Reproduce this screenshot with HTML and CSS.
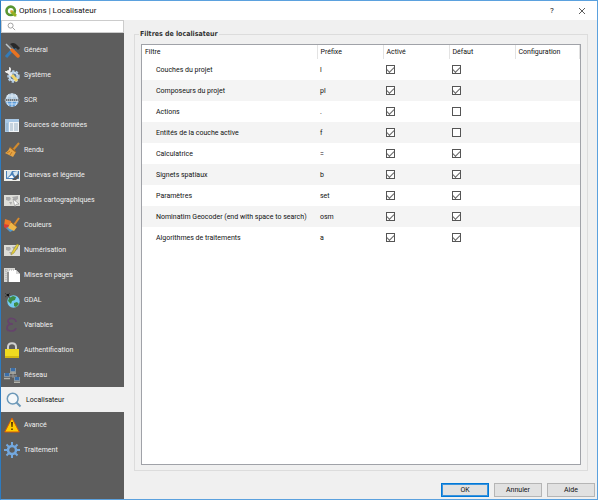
FILE: index.html
```html
<!DOCTYPE html>
<html lang="fr">
<head>
  <meta charset="UTF-8" />
  <title>Options | Localisateur</title>
  <link rel="stylesheet" href="styles.css">
</head>
<body>
  <div class="window">
    <header class="titlebar">
      <svg class="logo" viewBox="0 0 12 12"><circle cx="5.7" cy="5.8" r="4.2" fill="none" stroke="#589632" stroke-width="2.6"/><path d="M5.5 5.5h2.2l3.6 3.8v2.1H9.2L5.5 7.6z" fill="#93b023"/><path d="M5.5 5.5h1.5l.8 1-1 1-1.3-1z" fill="#ee9a33"/></svg>
      <h1>Options | Localisateur</h1>
      <button class="title-btn" aria-label="Aide">?</button>
      <button class="title-btn" aria-label="Fermer"><svg viewBox="0 0 8 8"><path d="M1 1l6 6M7 1L1 7" stroke="#333" stroke-width=".8" fill="none"/></svg></button>
    </header>

    <div class="content">
      <div class="sidebar">
        <div class="search">
          <svg viewBox="0 0 10 10"><circle cx="4" cy="4" r="2.8" fill="none" stroke="#999"/><path d="M6 6l3 3" stroke="#999"/></svg>
          <input type="text" aria-label="Rechercher">
        </div>
        <nav>
          <a href="#"><svg viewBox="0 0 16 16"><path d="M2 15L11 5" stroke="#347bb8" stroke-width="3"/><path d="M2 2l6 6" stroke="#bcc5c9" stroke-width="1.5"/><path d="M8 8l6 6" stroke="#e87322" stroke-width="3.5" stroke-linecap="round"/><path d="M6 2c3-2 5-1 7 1l3 3-2 2-2-2-2 1-2-3z" fill="#292929"/></svg>Général</a>
          <a href="#"><svg viewBox="0 0 16 16"><circle cx="9.5" cy="9.5" r="5" fill="#d8e5f0" stroke="#b1cce4" stroke-width="2.5" stroke-dasharray="2.2 1.4"/><circle cx="9.5" cy="9.5" r="3" fill="#57799a"/><path d="M3 4l5 5" stroke="#e9e9e9" stroke-width="2.5"/><path d="M8 8l5 6" stroke="#f1d568" stroke-width="3"/><path d="M1 4c0 2 3 3 5 1s1-5-1-5v3L3 4z" fill="#eee"/></svg>Système</a>
          <a href="#"><svg viewBox="0 0 16 16"><circle cx="8" cy="8" r="6.8" fill="#b4cde2"/><path d="M2 10h12c-1 6-11 6-12 0z" fill="#5b9ddd"/><path d="M8 1v14M3 4h10M3 12h10M5 2c-3 4-3 8 0 12M11 2c3 4 3 8 0 12" fill="none" stroke="#e5eef7" stroke-width=".8"/><path d="M0 7h16v2H0z" fill="#6b7680"/><path d="M1 8h14" stroke="#ddd" stroke-dasharray="1 1"/></svg>SCR</a>
          <a href="#"><svg viewBox="0 0 16 16"><path d="M1 2h14v13H1z" fill="#f1f4f7"/><path d="M1 2h14v3H1zM1 5h4v10H1z" fill="#a9c9e7"/><path d="M2 7h2M2 9h2M2 11h2M2 13h2M6 7h3M10 7h4M6 9h3M10 9h4M6 11h3M10 11h4M6 13h3M10 13h4" stroke="#86a2ba" stroke-width=".8"/></svg>Sources de données</a>
          <a href="#"><svg viewBox="0 0 16 16"><path d="M9 8l6-7" stroke="#d28b2e" stroke-width="2"/><path d="M6 5l6 5-3 5-8-4c2-1 4-3 5-6z" fill="#e5a344"/><path d="M6 5l6 5" stroke="#9d6521" stroke-width="1.4"/><path d="M3 11l3-2M6 13l2-3" stroke="#bd7922"/></svg>Rendu</a>
          <a href="#"><svg viewBox="0 0 16 16"><path d="M0 3h16v11H0z" fill="#f0f0eb"/><path d="M2 4h13v8H2z" fill="#4b82b8"/><path d="M3 4h5L6 8l-3 3zM9 5l5-1-1 6-3-2z" fill="#d7e6ee"/><path d="M8 13l6-6 1 3-3 3z" fill="#555"/><path d="M4 11l4-3 2 3" fill="#fff"/></svg>Canevas et légende</a>
          <a href="#"><svg viewBox="0 0 16 16"><path d="M0 3h16v11H0z" fill="#deded9"/><path d="M2 5h4l1 2-2 2-3-1zM8 5l6-1v3l-3 2zM5 10h3l-1 3z" fill="#aaa"/><path d="M9 7l6 5-3 .3L11 15z" fill="#fff" stroke="#777" stroke-width=".5"/></svg>Outils cartographiques</a>
          <a href="#"><svg viewBox="0 0 16 16"><path d="M1 2l6 2-1 6-6-1z" fill="#ef7c27"/><path d="M0 7l5 1-1 5-4-3z" fill="#db3e35"/><path d="M2 11l4-2 4 4-4 2z" fill="#5098ce"/><path d="M10 8l5-7" stroke="#d98b2c" stroke-width="2"/><path d="M7 5l6 5-3 4-6-3z" fill="#efb747"/><path d="M7 5l6 5" stroke="#a26424"/></svg>Couleurs</a>
          <a href="#"><svg viewBox="0 0 16 16"><path d="M0 3h16v11H0z" fill="#ddddd8"/><path d="M2 5h4l1 2-2 2-3-1zM8 5l6-1v3l-3 2zM5 10h3l-1 3z" fill="#aaa"/><path d="M8 10l5-8 2 1-5 8-3 2z" fill="#e4cf39" stroke="#8d803d" stroke-width=".5"/></svg>Numérisation</a>
          <a href="#"><svg viewBox="0 0 16 16"><path d="M0 1h11v14H0z" fill="#d7d7d5"/><path d="M3 5h9v10H3z" fill="#929292"/><path d="M5 3h7l4 4v8H5z" fill="#fff"/><path d="M12 3v4h4" fill="#d4d4d4"/><path d="M1 3h10M2 2v12" stroke="#aaa" stroke-width="1" stroke-dasharray="1 1"/></svg>Mises en pages</a>
          <a href="#"><svg viewBox="0 0 16 16"><circle cx="9.5" cy="9.5" r="6.2" fill="#72cbf2"/><path d="M5 6l4-2 3 1-1 3-3 1-1 3-3-3zM10 11l3-1 2 2-3 3-2-1z" fill="#3e8b45"/><path d="M1 1l5 5M6 1L1 5" stroke="#292929" stroke-width=".6"/><path d="M3 2h2v2H3z" fill="#111"/></svg>GDAL</a>
          <a href="#"><svg viewBox="0 0 16 16"><path d="M12 5c0-4-8-5-8-1 0 2 2 3 5 3-4 0-6 1-6 4 0 4 8 4 9 0" fill="none" stroke="#65436c" stroke-width="1.7"/></svg>Variables</a>
          <a href="#"><svg viewBox="0 0 16 16"><path d="M4 8V5c0-5 8-5 8 0v3" fill="none" stroke="#d0d0d0" stroke-width="2"/><path d="M1 7h14v9H1z" fill="#f0da20"/><path d="M1 14h14v2H1z" fill="#d3b713"/></svg>Authentification</a>
          <a href="#"><svg viewBox="0 0 16 16"><path d="M3 9h10M9 5v6" stroke="#999"/><path d="M6 1h6v4H6zM0 6h6v4H0zM10 10h6v4h-6z" fill="#8494a2"/><path d="M7 1h4v3H7zM1 6h4v3H1zM11 10h4v3h-4z" fill="#3b6ea8"/><path d="M6 6h6M0 11.5h6M10 15.3h6" stroke="#b1b1a9" stroke-width="1.4"/></svg>Réseau</a>
          <a href="#" class="active"><svg viewBox="0 0 16 16"><circle cx="6.7" cy="6.7" r="5.4" fill="#f5f8fa" stroke="#6d99b9" stroke-width="1.5"/><path d="M10.5 10.5l4 4" stroke="#6d99b9" stroke-width="2"/></svg>Localisateur</a>
          <a href="#"><svg viewBox="0 0 16 16"><path d="M8 1l7.3 14H.7z" fill="#fc0" stroke="#d15b0b" stroke-linejoin="round"/><path d="M7 5h2l-.4 5H7.4zM7.2 11.5h1.6V13H7.2z" fill="#593500"/></svg>Avancé</a>
          <a href="#"><svg viewBox="0 0 16 16"><path d="M8 0v16M0 8h16M2.5 2.5l11 11M13.5 2.5l-11 11" stroke="#73a8df" stroke-width="2"/><circle cx="8" cy="8" r="4" fill="#5d5d5d" stroke="#73a8df" stroke-width="2.5"/></svg>Traitement</a>
        </nav>
      </div>

      <main>
        <fieldset>
          <legend>Filtres de localisateur</legend>
          <div class="table-box">
            <table>
              <colgroup>
                <col class="col-filter"><col class="col-small"><col class="col-small"><col class="col-small"><col>
              </colgroup>
              <thead>
                <tr><th>Filtre</th><th>Préfixe</th><th>Activé</th><th>Défaut</th><th>Configuration</th></tr>
              </thead>
              <tbody>
                <tr><td>Couches du projet</td><td>l</td><td><input type="checkbox" aria-label="Activé" checked></td><td><input type="checkbox" aria-label="Défaut" checked></td><td></td></tr>
                <tr><td>Composeurs du projet</td><td>pl</td><td><input type="checkbox" aria-label="Activé" checked></td><td><input type="checkbox" aria-label="Défaut" checked></td><td></td></tr>
                <tr><td>Actions</td><td>.</td><td><input type="checkbox" aria-label="Activé" checked></td><td><input type="checkbox" aria-label="Défaut"></td><td></td></tr>
                <tr><td>Entités de la couche active</td><td>f</td><td><input type="checkbox" aria-label="Activé" checked></td><td><input type="checkbox" aria-label="Défaut"></td><td></td></tr>
                <tr><td>Calculatrice</td><td>=</td><td><input type="checkbox" aria-label="Activé" checked></td><td><input type="checkbox" aria-label="Défaut" checked></td><td></td></tr>
                <tr><td>Signets spatiaux</td><td>b</td><td><input type="checkbox" aria-label="Activé" checked></td><td><input type="checkbox" aria-label="Défaut" checked></td><td></td></tr>
                <tr><td>Paramètres</td><td>set</td><td><input type="checkbox" aria-label="Activé" checked></td><td><input type="checkbox" aria-label="Défaut" checked></td><td></td></tr>
                <tr><td>Nominatim Geocoder (end with space to search)</td><td>osm</td><td><input type="checkbox" aria-label="Activé" checked></td><td><input type="checkbox" aria-label="Défaut" checked></td><td></td></tr>
                <tr><td>Algorithmes de traitements</td><td>a</td><td><input type="checkbox" aria-label="Activé" checked></td><td><input type="checkbox" aria-label="Défaut" checked></td><td></td></tr>
              </tbody>
            </table>
          </div>
        </fieldset>
        <div class="buttons">
          <button class="default">OK</button>
          <button>Annuler</button>
          <button>Aide</button>
        </div>
      </main>
    </div>
  </div>
</body>
</html>
```
FILE: styles.css
```css
* {
  box-sizing: border-box;
}

body {
  margin: 0;
  font-family: Roboto, Tahoma, sans-serif;
  font-size: 7px;
  line-height: 10px;
  color: #111;
}

button,
input {
  font: inherit;
  color: inherit;
}

.window {
  display: flex;
  flex-direction: column;
  min-height: 100vh;
  background: #f0f0f0;
  border: 1px solid #5ba1de;
  border-left-color: #2d7bc0;
}

/* Title bar */
.titlebar {
  display: flex;
  align-items: center;
  height: 19px;
  padding-left: 4px;
  background: #fff;
}

.logo {
  width: 12px;
  height: 12px;
  margin-right: 2px;
}

.titlebar h1 {
  flex: 1;
  margin: 0;
  font-size: 8px;
  font-weight: normal;
}

.title-btn {
  display: flex;
  align-items: center;
  justify-content: center;
  width: 30px;
  height: 19px;
  padding: 0;
  border: none;
  background: none;
  font-size: 8px;
}

.title-btn svg {
  width: 8px;
  height: 8px;
}

.content {
  flex: 1;
  display: flex;
}

/* Sidebar */
.sidebar {
  width: 123px;
  background: #5d5d5d;
}

.search {
  display: flex;
  align-items: center;
  height: 13px;
  padding-left: 5px;
  background: #fff;
  border: 1px solid #ccc;
}

.search svg {
  width: 9px;
  height: 9px;
}

.search input {
  flex: 1;
  min-width: 0;
  height: 11px;
  border: none;
  outline: none;
  background: none;
}

nav {
  padding-top: 4px;
}

nav a {
  display: flex;
  align-items: center;
  gap: 4px;
  height: 25px;
  padding-left: 3px;
  color: #f0f0f0;
  text-decoration: none;
}

nav svg {
  width: 16px;
  height: 16px;
}

nav a.active {
  padding-left: 5px;
  background: #f0f0f0;
  color: #111;
}

/* Filters */
main {
  flex: 1;
  display: flex;
  flex-direction: column;
  min-width: 0;
  padding: 9px 2px 2px 10px;
}

fieldset {
  flex: 1;
  display: flex;
  min-width: 0;
  margin: 0 7px 12px 0;
  padding: 5px 6px;
  border: 1px solid #dcdcdc;
}

legend {
  padding: 0 1px;
  margin-left: -2px;
  font-family: "DejaVu Sans Condensed", "DejaVu Sans", sans-serif;
  font-weight: bold;
  color: #333;
}

.table-box {
  flex: 1;
  background: #fff;
  border: 1px solid #a0a2a8;
}

table {
  width: 100%;
  table-layout: fixed;
  border-collapse: collapse;
}

.col-filter {
  width: 175px;
}

.col-small {
  width: 66px;
}

th {
  height: 14px;
  padding: 0 3px;
  border-right: 1px solid #e3e3e3;
  font-weight: normal;
  text-align: left;
}

td {
  height: 21px;
  padding: 0 3px;
  white-space: nowrap;
}

td:first-child {
  padding-left: 14px;
}

tbody tr:nth-child(even) {
  background: #f4f4f4;
}

input[type="checkbox"] {
  appearance: none;
  display: block;
  width: 9px;
  height: 9px;
  margin: 0;
  background: #fff;
  border: 1px solid #555;
}

input[type="checkbox"]:checked::after {
  content: "";
  display: block;
  width: 6px;
  height: 3px;
  margin-top: 1px;
  border: solid #666;
  border-width: 0 0 1px 1px;
  transform: rotate(-45deg);
}

/* Dialog buttons */
.buttons {
  display: flex;
  justify-content: flex-end;
  gap: 5px;
}

.buttons button {
  width: 48px;
  height: 14px;
  padding: 0;
  background: #e1e1e1;
  border: 1px solid #b5b5b5;
}

.buttons .default {
  border-color: #0078d7;
  box-shadow: inset 0 0 0 1px #3b93dc;
}
```
